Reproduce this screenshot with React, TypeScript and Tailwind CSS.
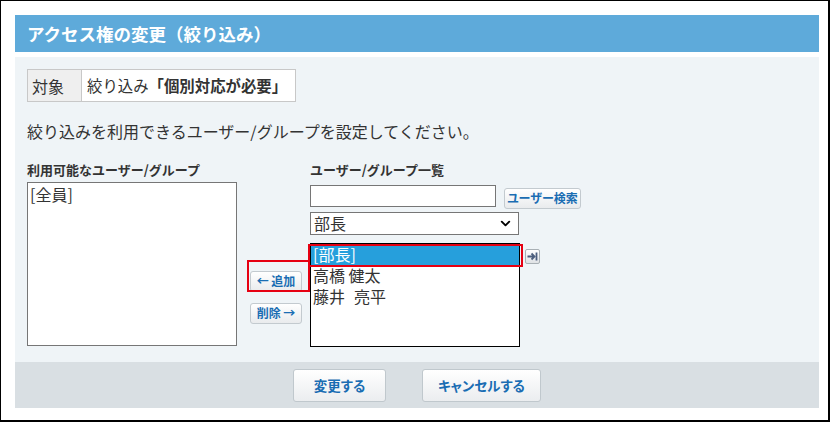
import { ChevronDown } from 'lucide-react';

const jp = "font-['Noto_Sans_CJK_JP','Noto_Sans',sans-serif]";

function SmallButton({ children, width }: { children: React.ReactNode; width: string }) {
  return (
    <button
      className={`${width} h-[21px] rounded-[3px] border border-[#c3cacf] bg-gradient-to-b from-white to-[#e9ebed] text-[12px] font-bold leading-none text-[#1a6db3] [font-feature-settings:'palt']`}
    >
      {children}
    </button>
  );
}

export default function App() {
  return (
    <div className={`w-[833px] h-[423px] bg-white ${jp}`}>
      <div className="w-[830px] h-[422px] border-t border-l border-r-2 border-b-2 border-black pl-[14px] pt-[14px]">
        {/* Title bar */}
        <div className="w-[804px] h-[37px] bg-[#5eaada] flex items-center pl-[12px]">
          <h1 className="text-[17.5px] font-bold text-white leading-none">アクセス権の変更（絞り込み）</h1>
        </div>

        {/* Body */}
        <div className="w-[804px] h-[305px] mt-[5px] bg-[#eff4f7] pl-[12px] pt-[12px] text-[#333]">
          <div className="flex w-fit h-[33px] border border-[#c8c8c8] text-[16px]">
            <div className="w-[54px] bg-[#efefef] border-r border-[#c8c8c8] flex items-center pl-[4px]">対象</div>
            <div className="bg-white flex items-center pl-[5px] pr-[8px] text-[15.4px]">
              絞り込み<span className="font-bold">「個別対応が必要」</span>
            </div>
          </div>

          <p className="mt-[17px] text-[16px] leading-[24px]">絞り込みを利用できるユーザー/グループを設定してください。</p>

          <div className="flex items-start mt-[18px]">
            {/* Available */}
            <div className="w-[210px]">
              <div className="text-[13px] font-bold leading-[18px]">利用可能なユーザー/グループ</div>
              <div className="mt-[3px] h-[164px] border border-[#767676] bg-white px-[2px] pt-[1px] text-[16px] leading-[21px]">
                [全員]
              </div>
            </div>

            {/* Move buttons */}
            <div className="w-[73px] pl-[13px] pt-[106px] flex flex-col items-start gap-[11px]">
              <div className="relative">
                <SmallButton width="w-[52px]">← 追加</SmallButton>
                <div className="absolute left-[-3px] top-[-7px] w-[63px] h-[32px] border-2 border-[#e60012]" />
              </div>
              <SmallButton width="w-[52px]">削除 →</SmallButton>
            </div>

            {/* User / group list */}
            <div>
              <div className="text-[13px] font-bold leading-[18px]">ユーザー/グループ一覧</div>
              <div className="flex items-center mt-[5px]">
                <input className="w-[186px] h-[22px] border border-[#767676] bg-white outline-none" />
                <div className="ml-[8px]">
                  <SmallButton width="w-[77px]">ユーザー検索</SmallButton>
                </div>
              </div>
              <div className="mt-[3px] w-[209px] h-[23px] border border-[#767676] bg-white flex items-center justify-between pl-[3px] pr-[5px] text-[16px]">
                <span>部長</span>
                <ChevronDown className="w-[15px] h-[15px] text-black" strokeWidth={3} />
              </div>
              <div className="flex items-start mt-[8px]">
                <div className="relative w-[210px] h-[104px] border border-black bg-white text-[16px] leading-[21px]">
                  <div className="bg-[#269fdc] text-white px-[2px]">[部長]</div>
                  <div className="px-[2px]">高橋 健太</div>
                  <div className="px-[2px] whitespace-pre">{'藤井\u2002\u200A亮平'}</div>
                  <div className="absolute left-[-3px] top-0 w-[215px] h-[23px] border-2 border-[#e60012]" />
                </div>
                <button className="ml-[5px] mt-[6px] w-[15px] h-[15px] rounded-[2px] border border-[#a9b0b5] bg-gradient-to-b from-white to-[#dfe2e5] flex items-center justify-center">
                  <svg width="11" height="9" viewBox="0 0 11 9">
                    <path d="M0.5 4.5h6.5M4.5 1.5l3 3-3 3" stroke="#4d5f7e" strokeWidth="1.8" fill="none" />
                    <path d="M9.5 0.5v8" stroke="#4d5f7e" strokeWidth="1.8" />
                  </svg>
                </button>
              </div>
            </div>
          </div>
        </div>

        {/* Footer */}
        <div className="w-[804px] h-[46px] bg-[#d9dfe3] flex items-center justify-center gap-[36px]">
          <button className="w-[93px] h-[33px] rounded-[3px] border border-[#c0c8cd] bg-gradient-to-b from-white to-[#ebedef] text-[13.5px] font-bold text-[#1a6db3] [font-feature-settings:'palt']">
            変更する
          </button>
          <button className="w-[119px] h-[33px] rounded-[3px] border border-[#c0c8cd] bg-gradient-to-b from-white to-[#ebedef] text-[13.5px] font-bold text-[#1a6db3] [font-feature-settings:'palt']">
            キャンセルする
          </button>
        </div>
      </div>
    </div>
  );
}
